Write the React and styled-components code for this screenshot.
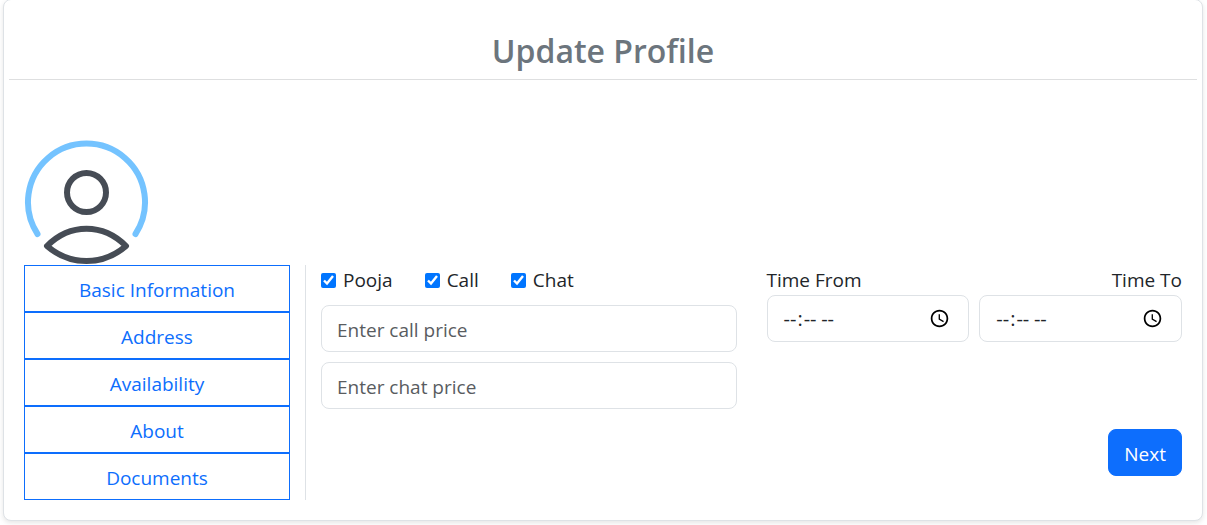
import React from "react";
import styled, { createGlobalStyle, css } from "styled-components";

const GlobalStyle = createGlobalStyle`
  *, *::before, *::after { box-sizing: border-box; }
  body {
    margin: 0;
    background: #fff;
    color: #212529;
    font-family: "Segoe UI", "Open Sans", "Noto Sans", sans-serif;
    font-size: 19px;
    line-height: 30px;
  }
  button, input { font: inherit; }
`;

const Card = styled.main`
  display: flex;
  flex-direction: column;
  margin: -1px 4px 4px 3px;
  padding: 5px;
  border: 1px solid #dee2e6;
  border-radius: 8px;
  background: #fff;
  box-shadow: 0 2px 5px rgba(0, 0, 0, 0.1);
`;

const Title = styled.h1`
  margin: 0;
  padding: 24px 0 6px;
  border-bottom: 1px solid #dedfe0;
  color: #6c757d;
  font-size: 32px;
  font-weight: 600;
  line-height: 44px;
  text-align: center;
`;

const AvatarRow = styled.div`
  display: flex;
  padding: 60px 15px 0;
`;

const Avatar = styled.svg`
  display: block;
  width: 125px;
  height: 125px;
`;

const Columns = styled.div`
  display: grid;
  grid-template-columns: 1fr 3fr;
  padding-bottom: 15px;
`;

const Sidebar = styled.nav`
  display: flex;
  flex-direction: column;
  padding: 0 15px;
  border-right: 1px solid #dee2e6;
`;

const buttonBase = css`
  height: 47px;
  padding: 2px 15px 0;
  border: 1px solid #0d6efd;
  cursor: pointer;
`;

const TabButton = styled.button`
  ${buttonBase}
  background: #fff;
  color: #0d6efd;
`;

const Form = styled.form`
  display: grid;
  grid-template-columns: 1fr 1fr;
`;

const FormColumn = styled.div`
  display: flex;
  flex-direction: column;
  gap: 10px;
  padding: 0 15px;
`;

const CheckRow = styled.div`
  display: flex;
  gap: 32px;
`;

const CheckLabel = styled.label`
  display: flex;
  align-items: center;
  gap: 7px;
`;

const Checkbox = styled.input`
  width: 15px;
  height: 15px;
  margin: 0;
`;

const TextField = styled.input`
  width: 100%;
  height: 47px;
  padding: 2px 15px 0;
  border: 1px solid #dee2e6;
  border-radius: 8px;
  background: #fff;
  color: #212529;
  &::placeholder { color: #595c5f; opacity: 1; }
`;

const TimeRow = styled.div`
  display: grid;
  grid-template-columns: 1fr 1fr;
  gap: 10px;
`;

const TimeGroup = styled.div`
  display: flex;
  flex-direction: column;
  text-align: ${(p) => p.$align};
`;

const TimeField = styled(TextField)`
  padding-top: 0;
  font-size: 20px;
`;

const Actions = styled.div`
  display: flex;
  justify-content: flex-end;
  margin-top: auto;
  padding-bottom: 24px;
`;

const NextButton = styled.button`
  ${buttonBase}
  border-radius: 8px;
  background: #0d6efd;
  color: #fff;
`;

const tabs = ["Basic Information", "Address", "Availability", "About", "Documents"];
const services = ["Pooja", "Call", "Chat"];

function UserAvatar() {
  return (
    <Avatar viewBox="0 0 125 125" fill="none" strokeWidth="6" strokeLinecap="round" strokeLinejoin="round" role="img" aria-label="Profile picture">
      <path d="M13.500 94A58.500 58.500 0 1 1 111.500 94" stroke="#74c3ff" />
      <circle cx="62.500" cy="52.500" r="19.500" stroke="#464c55" />
      <path d="M23 106C46 83 79 83 102 106C79 126 46 126 23 106Z" stroke="#464c55" />
    </Avatar>
  );
}

export default function App() {
  return (
    <>
      <GlobalStyle />
      <Card>
        <Title>Update Profile</Title>
        <AvatarRow>
          <UserAvatar />
        </AvatarRow>
        <Columns>
          <Sidebar aria-label="Profile sections">
            {tabs.map((tab) => (
              <TabButton key={tab} type="button">{tab}</TabButton>
            ))}
          </Sidebar>
          <Form onSubmit={(e) => e.preventDefault()}>
            <FormColumn>
              <CheckRow>
                {services.map((service) => (
                  <CheckLabel key={service}>
                    <Checkbox type="checkbox" defaultChecked />
                    {service}
                  </CheckLabel>
                ))}
              </CheckRow>
              <TextField type="text" placeholder="Enter call price" aria-label="Call price" />
              <TextField type="text" placeholder="Enter chat price" aria-label="Chat price" />
            </FormColumn>
            <FormColumn>
              <TimeRow>
                <TimeGroup $align="left">
                  <label htmlFor="time-from">Time From</label>
                  <TimeField id="time-from" type="time" />
                </TimeGroup>
                <TimeGroup $align="right">
                  <label htmlFor="time-to">Time To</label>
                  <TimeField id="time-to" type="time" />
                </TimeGroup>
              </TimeRow>
              <Actions>
                <NextButton type="submit">Next</NextButton>
              </Actions>
            </FormColumn>
          </Form>
        </Columns>
      </Card>
    </>
  );
}
